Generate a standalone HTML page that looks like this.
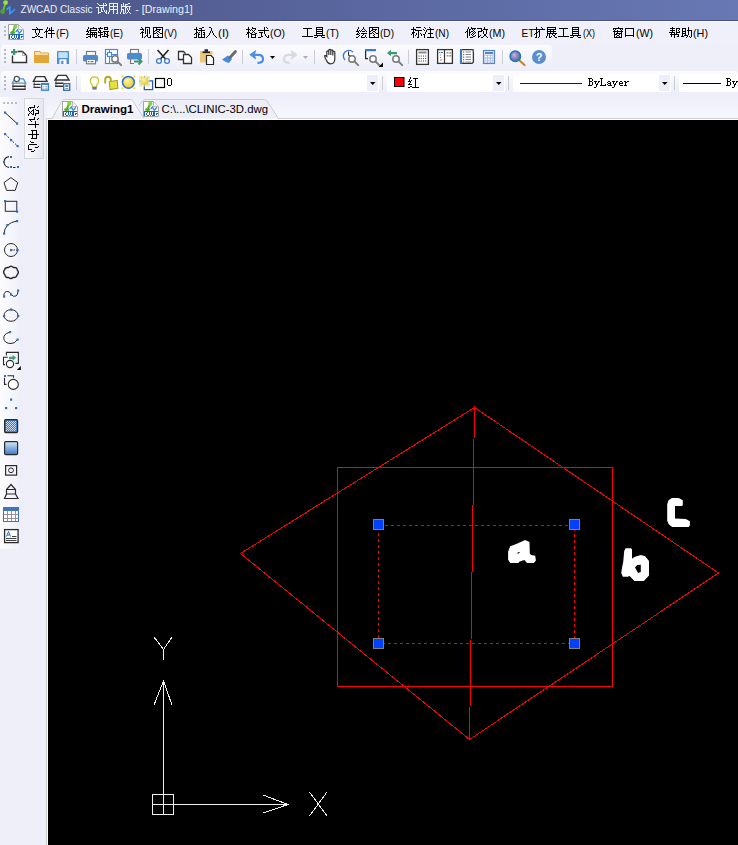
<!DOCTYPE html>
<html><head><meta charset="utf-8"><style>
html,body{margin:0;padding:0;width:738px;height:845px;overflow:hidden;background:#efeffa;}
svg{display:block;}
</style></head><body>
<svg width="738" height="845" viewBox="0 0 738 845">
<defs>
<linearGradient id="gTitle" x1="0" y1="0" x2="1" y2="0">
  <stop offset="0" stop-color="#4b5688"/>
  <stop offset="0.5" stop-color="#5a67a0"/>
  <stop offset="1" stop-color="#6878b4"/>
</linearGradient>
<linearGradient id="gTb" x1="0" y1="0" x2="0" y2="1">
  <stop offset="0" stop-color="#fcfcff"/>
  <stop offset="1" stop-color="#ededf9"/>
</linearGradient>
<linearGradient id="gLeft" x1="0" y1="0" x2="1" y2="0">
  <stop offset="0" stop-color="#fdfdff"/>
  <stop offset="1" stop-color="#ededf9"/>
</linearGradient>
<linearGradient id="gTab" x1="0" y1="0" x2="0" y2="1">
  <stop offset="0" stop-color="#fbfbff"/>
  <stop offset="1" stop-color="#eeeef8"/>
</linearGradient>
<linearGradient id="gDC" x1="0" y1="0" x2="1" y2="0">
  <stop offset="0" stop-color="#fbfbfd"/>
  <stop offset="1" stop-color="#e6e6f0"/>
</linearGradient>
</defs>
<rect x="0" y="0" width="738" height="845" fill="#efeffa"/>
<rect x="0" y="0" width="738" height="20" fill="url(#gTitle)"/>
<rect x="0" y="20" width="738" height="1" fill="#46518a"/>
<rect x="0" y="21" width="738" height="1" fill="#fbfbff"/>
<path d="M5.5,2.8 L3.2,10.5" stroke="#6cc828" stroke-width="1.8" stroke-linecap="round"/><circle cx="2.6" cy="11.6" r="2.3" fill="#4cab1a"/><circle cx="5.6" cy="2.6" r="2.4" fill="#9ce03a"/>
<path d="M6.4,9.6 L9.8,6.8 V13.8 L15,9.2" fill="none" stroke="#3a98f0" stroke-width="1.7" stroke-linejoin="round"/>
<text x="20.5" y="13" font-family="Liberation Sans" font-weight="normal" font-size="11.5" fill="#eceef6" textLength="72" lengthAdjust="spacingAndGlyphs" >ZWCAD Classic</text>
<path transform="translate(94,-1)" d="M3,4h1v1h-1zM9,4h1v1h-1zM11,4h1v1h-1zM15,4h9v1h-9zM29,4h1v1h-1zM34,4h2v1h-2zM4,5h1v1h-1zM9,5h1v1h-1zM12,5h1v1h-1zM15,5h1v1h-1zM19,5h1v1h-1zM23,5h1v1h-1zM27,5h1v1h-1zM29,5h1v1h-1zM31,5h3v1h-3zM5,6h8v1h-8zM15,6h1v1h-1zM19,6h1v1h-1zM23,6h1v1h-1zM27,6h1v1h-1zM29,6h1v1h-1zM31,6h1v1h-1zM9,7h1v1h-1zM15,7h9v1h-9zM27,7h10v1h-10zM2,8h3v1h-3zM6,8h4v1h-4zM15,8h1v1h-1zM19,8h1v1h-1zM23,8h1v1h-1zM27,8h1v1h-1zM31,8h2v1h-2zM35,8h1v1h-1zM4,9h1v1h-1zM7,9h1v1h-1zM9,9h1v1h-1zM15,9h1v1h-1zM19,9h1v1h-1zM23,9h1v1h-1zM27,9h1v1h-1zM31,9h1v1h-1zM33,9h1v1h-1zM35,9h1v1h-1zM4,10h1v1h-1zM7,10h1v1h-1zM9,10h1v1h-1zM15,10h9v1h-9zM27,10h3v1h-3zM31,10h1v1h-1zM33,10h1v1h-1zM35,10h1v1h-1zM4,11h1v1h-1zM7,11h1v1h-1zM10,11h1v1h-1zM12,11h1v1h-1zM15,11h1v1h-1zM19,11h1v1h-1zM23,11h1v1h-1zM27,11h1v1h-1zM29,11h1v1h-1zM31,11h1v1h-1zM34,11h1v1h-1zM4,12h1v1h-1zM7,12h2v1h-2zM10,12h1v1h-1zM12,12h1v1h-1zM15,12h1v1h-1zM19,12h1v1h-1zM23,12h1v1h-1zM27,12h1v1h-1zM29,12h1v1h-1zM31,12h1v1h-1zM34,12h1v1h-1zM4,13h3v1h-3zM11,13h2v1h-2zM14,13h1v1h-1zM19,13h1v1h-1zM23,13h1v1h-1zM26,13h1v1h-1zM29,13h1v1h-1zM31,13h1v1h-1zM33,13h1v1h-1zM35,13h1v1h-1zM4,14h1v1h-1zM12,14h1v1h-1zM14,14h1v1h-1zM19,14h1v1h-1zM22,14h2v1h-2zM26,14h1v1h-1zM29,14h2v1h-2zM32,14h1v1h-1zM36,14h1v1h-1z" fill="#eef0f8" shape-rendering="crispEdges"/>
<text x="135.3" y="13" font-family="Liberation Sans" font-weight="normal" font-size="11.5" fill="#eceef6" textLength="57.5" lengthAdjust="spacingAndGlyphs" >- [Drawing1]</text>
<rect x="0" y="22" width="738" height="23" fill="#f0f0fa"/>
<rect x="4" y="26" width="2" height="2" fill="#b8bcc0"/><rect x="4" y="30" width="2" height="2" fill="#b8bcc0"/><rect x="4" y="34" width="2" height="2" fill="#b8bcc0"/>
<g transform="translate(8,24)">
<path d="M0.5,0.5 H10.5 L15.5,5.5 V15.5 H0.5 Z" fill="#fff" stroke="#a3a3a3"/>
<path d="M10.5,0.5 V5.5 H15.5" fill="#f4f4f4" stroke="#b8b8b8"/>
<path d="M6.8,3.6 L5.2,7.2" stroke="#5cb028" stroke-width="2.2" stroke-linecap="round"/>
<circle cx="7.3" cy="2.7" r="2.1" fill="#86d43c"/>
<ellipse cx="4.6" cy="8.4" rx="2.6" ry="1.5" fill="#52ac22"/>
<path d="M7.7,8 L9.5,6 L11.2,9.3 L13.9,6.2" stroke="#3a8ae0" stroke-width="1.3" fill="none"/>
<rect x="1" y="10" width="14" height="5" fill="#1a66b8"/>
<g fill="#fff" shape-rendering="crispEdges"><rect x="2" y="11" width="1" height="4"/><rect x="3" y="11" width="1" height="1"/><rect x="4" y="12" width="1" height="2"/><rect x="3" y="14" width="1" height="1"/><rect x="5" y="11" width="1" height="3"/><rect x="7" y="11" width="1" height="3"/><rect x="9" y="11" width="1" height="3"/><rect x="6" y="14" width="1" height="1"/><rect x="8" y="14" width="1" height="1"/><rect x="5" y="14" width="1" height="0.01"/><rect x="12" y="11" width="3" height="1"/><rect x="12" y="12" width="1" height="2"/><rect x="12" y="14" width="3" height="1"/><rect x="14" y="13" width="1" height="1"/></g>
</g>
<path transform="translate(30,23)" d="M6,4h1v1h-1zM17,4h1v1h-1zM21,4h1v1h-1zM7,5h1v1h-1zM17,5h1v1h-1zM19,5h1v1h-1zM21,5h1v1h-1zM2,6h11v1h-11zM16,6h1v1h-1zM19,6h1v1h-1zM21,6h1v1h-1zM5,7h1v1h-1zM9,7h1v1h-1zM16,7h1v1h-1zM18,7h6v1h-6zM5,8h1v1h-1zM9,8h1v1h-1zM15,8h3v1h-3zM21,8h1v1h-1zM5,9h1v1h-1zM9,9h1v1h-1zM14,9h1v1h-1zM16,9h1v1h-1zM21,9h1v1h-1zM6,10h1v1h-1zM8,10h1v1h-1zM16,10h1v1h-1zM18,10h7v1h-7zM6,11h1v1h-1zM8,11h1v1h-1zM16,11h1v1h-1zM21,11h1v1h-1zM7,12h1v1h-1zM16,12h1v1h-1zM21,12h1v1h-1zM5,13h2v1h-2zM8,13h2v1h-2zM16,13h1v1h-1zM21,13h1v1h-1zM2,14h3v1h-3zM10,14h3v1h-3zM16,14h1v1h-1zM21,14h1v1h-1z" fill="#000" shape-rendering="crispEdges"/>
<text x="56" y="36.9" font-family="Liberation Sans" font-weight="normal" font-size="11.5" fill="#000" textLength="13" lengthAdjust="spacingAndGlyphs" >(F)</text>
<path transform="translate(84,23)" d="M4,4h1v1h-1zM9,4h1v1h-1zM16,4h1v1h-1zM20,4h4v1h-4zM4,5h1v1h-1zM6,5h7v1h-7zM14,5h5v1h-5zM20,5h1v1h-1zM23,5h1v1h-1zM3,6h1v1h-1zM6,6h1v1h-1zM12,6h1v1h-1zM15,6h1v1h-1zM20,6h4v1h-4zM3,7h1v1h-1zM5,7h8v1h-8zM15,7h2v1h-2zM2,8h3v1h-3zM6,8h1v1h-1zM14,8h1v1h-1zM16,8h1v1h-1zM19,8h6v1h-6zM4,9h1v1h-1zM6,9h7v1h-7zM14,9h5v1h-5zM20,9h1v1h-1zM23,9h1v1h-1zM3,10h1v1h-1zM6,10h1v1h-1zM8,10h1v1h-1zM10,10h1v1h-1zM12,10h1v1h-1zM16,10h1v1h-1zM20,10h2v1h-2zM23,10h1v1h-1zM2,11h11v1h-11zM16,11h3v1h-3zM20,11h1v1h-1zM22,11h2v1h-2zM6,12h1v1h-1zM8,12h1v1h-1zM10,12h1v1h-1zM12,12h1v1h-1zM14,12h3v1h-3zM20,12h1v1h-1zM23,12h2v1h-2zM4,13h3v1h-3zM8,13h1v1h-1zM10,13h1v1h-1zM12,13h1v1h-1zM16,13h1v1h-1zM18,13h6v1h-6zM2,14h2v1h-2zM6,14h1v1h-1zM11,14h2v1h-2zM16,14h1v1h-1zM23,14h1v1h-1z" fill="#000" shape-rendering="crispEdges"/>
<text x="110" y="36.9" font-family="Liberation Sans" font-weight="normal" font-size="11.5" fill="#000" textLength="13" lengthAdjust="spacingAndGlyphs" >(E)</text>
<path transform="translate(138,23)" d="M3,4h1v1h-1zM7,4h5v1h-5zM15,4h10v1h-10zM4,5h1v1h-1zM7,5h1v1h-1zM11,5h1v1h-1zM15,5h1v1h-1zM18,5h1v1h-1zM24,5h1v1h-1zM2,6h4v1h-4zM7,6h1v1h-1zM9,6h1v1h-1zM11,6h1v1h-1zM15,6h1v1h-1zM18,6h5v1h-5zM24,6h1v1h-1zM5,7h1v1h-1zM7,7h1v1h-1zM9,7h1v1h-1zM11,7h1v1h-1zM15,7h1v1h-1zM17,7h2v1h-2zM21,7h1v1h-1zM24,7h1v1h-1zM4,8h1v1h-1zM7,8h1v1h-1zM9,8h1v1h-1zM11,8h1v1h-1zM15,8h2v1h-2zM19,8h2v1h-2zM24,8h1v1h-1zM3,9h3v1h-3zM7,9h1v1h-1zM9,9h1v1h-1zM11,9h1v1h-1zM15,9h1v1h-1zM18,9h1v1h-1zM21,9h1v1h-1zM24,9h1v1h-1zM2,10h1v1h-1zM4,10h1v1h-1zM7,10h1v1h-1zM9,10h1v1h-1zM11,10h1v1h-1zM15,10h3v1h-3zM19,10h1v1h-1zM22,10h3v1h-3zM4,11h1v1h-1zM9,11h1v1h-1zM15,11h1v1h-1zM20,11h1v1h-1zM24,11h1v1h-1zM4,12h1v1h-1zM8,12h2v1h-2zM12,12h1v1h-1zM15,12h1v1h-1zM19,12h1v1h-1zM24,12h1v1h-1zM4,13h1v1h-1zM7,13h1v1h-1zM9,13h1v1h-1zM12,13h1v1h-1zM15,13h1v1h-1zM20,13h1v1h-1zM24,13h1v1h-1zM4,14h1v1h-1zM6,14h1v1h-1zM10,14h3v1h-3zM15,14h10v1h-10z" fill="#000" shape-rendering="crispEdges"/>
<text x="164" y="36.9" font-family="Liberation Sans" font-weight="normal" font-size="11.5" fill="#000" textLength="13" lengthAdjust="spacingAndGlyphs" >(V)</text>
<path transform="translate(192,23)" d="M4,4h1v1h-1zM10,4h2v1h-2zM17,4h2v1h-2zM4,5h1v1h-1zM7,5h3v1h-3zM19,5h1v1h-1zM2,6h4v1h-4zM9,6h1v1h-1zM19,6h1v1h-1zM4,7h1v1h-1zM6,7h7v1h-7zM19,7h1v1h-1zM4,8h1v1h-1zM9,8h1v1h-1zM18,8h1v1h-1zM20,8h1v1h-1zM4,9h2v1h-2zM7,9h1v1h-1zM9,9h1v1h-1zM11,9h2v1h-2zM18,9h1v1h-1zM20,9h1v1h-1zM3,10h2v1h-2zM6,10h1v1h-1zM9,10h1v1h-1zM12,10h1v1h-1zM17,10h1v1h-1zM21,10h1v1h-1zM2,11h1v1h-1zM4,11h1v1h-1zM6,11h2v1h-2zM9,11h1v1h-1zM11,11h2v1h-2zM17,11h1v1h-1zM21,11h1v1h-1zM4,12h1v1h-1zM6,12h1v1h-1zM9,12h1v1h-1zM12,12h1v1h-1zM16,12h1v1h-1zM22,12h1v1h-1zM4,13h1v1h-1zM6,13h1v1h-1zM9,13h1v1h-1zM12,13h1v1h-1zM15,13h1v1h-1zM23,13h1v1h-1zM2,14h3v1h-3zM6,14h7v1h-7zM14,14h1v1h-1zM24,14h1v1h-1z" fill="#000" shape-rendering="crispEdges"/>
<text x="218" y="36.9" font-family="Liberation Sans" font-weight="normal" font-size="11.5" fill="#000" textLength="11" lengthAdjust="spacingAndGlyphs" >(I)</text>
<path transform="translate(244,23)" d="M4,4h1v1h-1zM8,4h1v1h-1zM20,4h1v1h-1zM22,4h1v1h-1zM4,5h1v1h-1zM8,5h4v1h-4zM20,5h1v1h-1zM23,5h1v1h-1zM2,6h4v1h-4zM7,6h1v1h-1zM11,6h1v1h-1zM20,6h1v1h-1zM4,7h1v1h-1zM6,7h1v1h-1zM8,7h1v1h-1zM10,7h1v1h-1zM14,7h11v1h-11zM4,8h1v1h-1zM9,8h1v1h-1zM20,8h1v1h-1zM3,9h3v1h-3zM8,9h1v1h-1zM10,9h1v1h-1zM15,9h4v1h-4zM20,9h1v1h-1zM3,10h2v1h-2zM6,10h2v1h-2zM11,10h2v1h-2zM17,10h1v1h-1zM20,10h1v1h-1zM2,11h1v1h-1zM4,11h1v1h-1zM7,11h5v1h-5zM17,11h1v1h-1zM21,11h1v1h-1zM4,12h1v1h-1zM7,12h1v1h-1zM11,12h1v1h-1zM17,12h1v1h-1zM21,12h1v1h-1zM24,12h1v1h-1zM4,13h1v1h-1zM7,13h1v1h-1zM11,13h1v1h-1zM17,13h2v1h-2zM22,13h1v1h-1zM24,13h1v1h-1zM4,14h1v1h-1zM7,14h5v1h-5zM14,14h3v1h-3zM23,14h2v1h-2z" fill="#000" shape-rendering="crispEdges"/>
<text x="270" y="36.9" font-family="Liberation Sans" font-weight="normal" font-size="11.5" fill="#000" textLength="15" lengthAdjust="spacingAndGlyphs" >(O)</text>
<path transform="translate(300,23)" d="M16,4h7v1h-7zM3,5h9v1h-9zM16,5h1v1h-1zM22,5h1v1h-1zM7,6h1v1h-1zM16,6h7v1h-7zM7,7h1v1h-1zM16,7h1v1h-1zM22,7h1v1h-1zM7,8h1v1h-1zM16,8h7v1h-7zM7,9h1v1h-1zM16,9h1v1h-1zM22,9h1v1h-1zM7,10h1v1h-1zM16,10h7v1h-7zM7,11h1v1h-1zM16,11h1v1h-1zM22,11h1v1h-1zM7,12h1v1h-1zM14,12h11v1h-11zM2,13h11v1h-11zM17,13h1v1h-1zM21,13h1v1h-1zM14,14h3v1h-3zM22,14h3v1h-3z" fill="#000" shape-rendering="crispEdges"/>
<text x="326" y="36.9" font-family="Liberation Sans" font-weight="normal" font-size="11.5" fill="#000" textLength="13" lengthAdjust="spacingAndGlyphs" >(T)</text>
<path transform="translate(354,23)" d="M4,4h1v1h-1zM9,4h1v1h-1zM15,4h10v1h-10zM4,5h1v1h-1zM9,5h1v1h-1zM15,5h1v1h-1zM18,5h1v1h-1zM24,5h1v1h-1zM3,6h1v1h-1zM8,6h1v1h-1zM10,6h1v1h-1zM15,6h1v1h-1zM18,6h5v1h-5zM24,6h1v1h-1zM3,7h1v1h-1zM5,7h1v1h-1zM7,7h1v1h-1zM11,7h1v1h-1zM15,7h1v1h-1zM17,7h2v1h-2zM21,7h1v1h-1zM24,7h1v1h-1zM2,8h3v1h-3zM6,8h1v1h-1zM8,8h3v1h-3zM12,8h1v1h-1zM15,8h2v1h-2zM19,8h2v1h-2zM24,8h1v1h-1zM4,9h1v1h-1zM15,9h1v1h-1zM18,9h1v1h-1zM21,9h1v1h-1zM24,9h1v1h-1zM3,10h1v1h-1zM5,10h1v1h-1zM7,10h6v1h-6zM15,10h3v1h-3zM19,10h1v1h-1zM22,10h3v1h-3zM2,11h3v1h-3zM9,11h1v1h-1zM15,11h1v1h-1zM20,11h1v1h-1zM24,11h1v1h-1zM5,12h1v1h-1zM8,12h1v1h-1zM11,12h1v1h-1zM15,12h1v1h-1zM19,12h1v1h-1zM24,12h1v1h-1zM4,13h1v1h-1zM7,13h1v1h-1zM11,13h1v1h-1zM15,13h1v1h-1zM20,13h1v1h-1zM24,13h1v1h-1zM2,14h2v1h-2zM7,14h4v1h-4zM12,14h1v1h-1zM15,14h10v1h-10z" fill="#000" shape-rendering="crispEdges"/>
<text x="380" y="36.9" font-family="Liberation Sans" font-weight="normal" font-size="11.5" fill="#000" textLength="14" lengthAdjust="spacingAndGlyphs" >(D)</text>
<path transform="translate(409,23)" d="M4,4h1v1h-1zM7,4h5v1h-5zM15,4h1v1h-1zM20,4h1v1h-1zM4,5h1v1h-1zM16,5h1v1h-1zM21,5h1v1h-1zM2,6h5v1h-5zM14,6h1v1h-1zM18,6h7v1h-7zM4,7h1v1h-1zM6,7h7v1h-7zM15,7h1v1h-1zM17,7h1v1h-1zM21,7h1v1h-1zM4,8h1v1h-1zM9,8h1v1h-1zM17,8h1v1h-1zM21,8h1v1h-1zM3,9h3v1h-3zM9,9h1v1h-1zM16,9h1v1h-1zM21,9h1v1h-1zM3,10h2v1h-2zM7,10h1v1h-1zM9,10h1v1h-1zM11,10h1v1h-1zM16,10h1v1h-1zM19,10h5v1h-5zM2,11h1v1h-1zM4,11h1v1h-1zM7,11h1v1h-1zM9,11h1v1h-1zM12,11h1v1h-1zM14,11h2v1h-2zM21,11h1v1h-1zM4,12h1v1h-1zM6,12h1v1h-1zM9,12h1v1h-1zM12,12h1v1h-1zM15,12h1v1h-1zM21,12h1v1h-1zM4,13h1v1h-1zM9,13h1v1h-1zM15,13h1v1h-1zM21,13h1v1h-1zM4,14h1v1h-1zM8,14h2v1h-2zM15,14h1v1h-1zM18,14h7v1h-7z" fill="#000" shape-rendering="crispEdges"/>
<text x="435" y="36.9" font-family="Liberation Sans" font-weight="normal" font-size="11.5" fill="#000" textLength="14" lengthAdjust="spacingAndGlyphs" >(N)</text>
<path transform="translate(463,23)" d="M5,4h1v1h-1zM8,4h1v1h-1zM21,4h1v1h-1zM5,5h1v1h-1zM8,5h5v1h-5zM14,5h5v1h-5zM21,5h1v1h-1zM4,6h1v1h-1zM6,6h2v1h-2zM9,6h1v1h-1zM11,6h1v1h-1zM18,6h1v1h-1zM20,6h5v1h-5zM4,7h1v1h-1zM6,7h1v1h-1zM10,7h1v1h-1zM18,7h2v1h-2zM23,7h1v1h-1zM3,8h2v1h-2zM6,8h1v1h-1zM8,8h2v1h-2zM11,8h1v1h-1zM15,8h4v1h-4zM20,8h1v1h-1zM23,8h1v1h-1zM2,9h1v1h-1zM4,9h1v1h-1zM6,9h2v1h-2zM10,9h1v1h-1zM12,9h1v1h-1zM15,9h1v1h-1zM20,9h1v1h-1zM23,9h1v1h-1zM4,10h1v1h-1zM6,10h1v1h-1zM9,10h1v1h-1zM11,10h1v1h-1zM15,10h1v1h-1zM20,10h1v1h-1zM23,10h1v1h-1zM4,11h1v1h-1zM6,11h1v1h-1zM8,11h1v1h-1zM10,11h1v1h-1zM15,11h1v1h-1zM21,11h2v1h-2zM4,12h1v1h-1zM6,12h1v1h-1zM9,12h1v1h-1zM12,12h1v1h-1zM15,12h1v1h-1zM17,12h1v1h-1zM21,12h2v1h-2zM4,13h1v1h-1zM10,13h2v1h-2zM15,13h2v1h-2zM20,13h1v1h-1zM23,13h1v1h-1zM4,14h1v1h-1zM7,14h3v1h-3zM15,14h1v1h-1zM18,14h2v1h-2zM24,14h1v1h-1z" fill="#000" shape-rendering="crispEdges"/>
<text x="489" y="36.9" font-family="Liberation Sans" font-weight="normal" font-size="11.5" fill="#000" textLength="16" lengthAdjust="spacingAndGlyphs" >(M)</text>
<path transform="translate(610,23)" d="M8,4h1v1h-1zM3,5h10v1h-10zM15,5h9v1h-9zM3,6h1v1h-1zM5,6h1v1h-1zM10,6h1v1h-1zM12,6h1v1h-1zM15,6h1v1h-1zM23,6h1v1h-1zM4,7h1v1h-1zM7,7h1v1h-1zM11,7h1v1h-1zM15,7h1v1h-1zM23,7h1v1h-1zM3,8h10v1h-10zM15,8h1v1h-1zM23,8h1v1h-1zM4,9h1v1h-1zM7,9h1v1h-1zM11,9h1v1h-1zM15,9h1v1h-1zM23,9h1v1h-1zM4,10h1v1h-1zM6,10h6v1h-6zM15,10h1v1h-1zM23,10h1v1h-1zM4,11h3v1h-3zM9,11h1v1h-1zM11,11h1v1h-1zM15,11h1v1h-1zM23,11h1v1h-1zM4,12h1v1h-1zM7,12h2v1h-2zM11,12h1v1h-1zM15,12h9v1h-9zM4,13h1v1h-1zM6,13h1v1h-1zM9,13h1v1h-1zM11,13h1v1h-1zM15,13h1v1h-1zM23,13h1v1h-1zM4,14h8v1h-8z" fill="#000" shape-rendering="crispEdges"/>
<text x="636" y="36.9" font-family="Liberation Sans" font-weight="normal" font-size="11.5" fill="#000" textLength="17" lengthAdjust="spacingAndGlyphs" >(W)</text>
<path transform="translate(667,23)" d="M5,4h1v1h-1zM21,4h1v1h-1zM3,5h5v1h-5zM9,5h4v1h-4zM15,5h4v1h-4zM21,5h1v1h-1zM5,6h1v1h-1zM9,6h1v1h-1zM12,6h1v1h-1zM15,6h1v1h-1zM18,6h1v1h-1zM21,6h1v1h-1zM3,7h5v1h-5zM9,7h1v1h-1zM11,7h1v1h-1zM15,7h1v1h-1zM18,7h1v1h-1zM20,7h5v1h-5zM5,8h1v1h-1zM9,8h1v1h-1zM12,8h1v1h-1zM15,8h4v1h-4zM21,8h1v1h-1zM24,8h1v1h-1zM2,9h6v1h-6zM9,9h4v1h-4zM15,9h1v1h-1zM18,9h1v1h-1zM21,9h1v1h-1zM24,9h1v1h-1zM4,10h1v1h-1zM7,10h1v1h-1zM9,10h1v1h-1zM15,10h4v1h-4zM21,10h1v1h-1zM24,10h1v1h-1zM3,11h9v1h-9zM15,11h1v1h-1zM18,11h1v1h-1zM21,11h1v1h-1zM24,11h1v1h-1zM4,12h1v1h-1zM7,12h1v1h-1zM11,12h1v1h-1zM15,12h1v1h-1zM17,12h4v1h-4zM24,12h1v1h-1zM4,13h1v1h-1zM7,13h1v1h-1zM10,13h2v1h-2zM14,13h3v1h-3zM20,13h1v1h-1zM22,13h1v1h-1zM24,13h1v1h-1zM7,14h1v1h-1zM19,14h1v1h-1zM23,14h1v1h-1z" fill="#000" shape-rendering="crispEdges"/>
<text x="693" y="36.9" font-family="Liberation Sans" font-weight="normal" font-size="11.5" fill="#000" textLength="15" lengthAdjust="spacingAndGlyphs" >(H)</text>
<text x="521.5" y="36.9" font-family="Liberation Sans" font-weight="normal" font-size="11.5" fill="#000" textLength="13" lengthAdjust="spacingAndGlyphs" >ET</text>
<path transform="translate(532,23)" d="M4,4h1v1h-1zM9,4h1v1h-1zM15,4h9v1h-9zM40,4h7v1h-7zM4,5h1v1h-1zM10,5h1v1h-1zM15,5h1v1h-1zM23,5h1v1h-1zM27,5h9v1h-9zM40,5h1v1h-1zM46,5h1v1h-1zM2,6h11v1h-11zM15,6h9v1h-9zM31,6h1v1h-1zM40,6h7v1h-7zM4,7h1v1h-1zM7,7h1v1h-1zM15,7h1v1h-1zM18,7h1v1h-1zM21,7h1v1h-1zM31,7h1v1h-1zM40,7h1v1h-1zM46,7h1v1h-1zM4,8h1v1h-1zM6,8h2v1h-2zM15,8h9v1h-9zM31,8h1v1h-1zM40,8h7v1h-7zM4,9h2v1h-2zM7,9h1v1h-1zM15,9h1v1h-1zM18,9h1v1h-1zM21,9h1v1h-1zM31,9h1v1h-1zM40,9h1v1h-1zM46,9h1v1h-1zM3,10h2v1h-2zM7,10h1v1h-1zM15,10h10v1h-10zM31,10h1v1h-1zM40,10h7v1h-7zM2,11h1v1h-1zM4,11h1v1h-1zM7,11h1v1h-1zM15,11h1v1h-1zM17,11h1v1h-1zM20,11h1v1h-1zM23,11h1v1h-1zM31,11h1v1h-1zM40,11h1v1h-1zM46,11h1v1h-1zM4,12h1v1h-1zM7,12h1v1h-1zM15,12h1v1h-1zM17,12h1v1h-1zM21,12h2v1h-2zM31,12h1v1h-1zM38,12h11v1h-11zM4,13h1v1h-1zM7,13h1v1h-1zM14,13h1v1h-1zM17,13h1v1h-1zM19,13h1v1h-1zM22,13h1v1h-1zM26,13h11v1h-11zM41,13h1v1h-1zM45,13h1v1h-1zM3,14h2v1h-2zM6,14h1v1h-1zM14,14h1v1h-1zM17,14h2v1h-2zM23,14h2v1h-2zM38,14h3v1h-3zM46,14h3v1h-3z" fill="#000" shape-rendering="crispEdges"/>
<text x="583" y="36.9" font-family="Liberation Sans" font-weight="normal" font-size="11.5" fill="#000" textLength="12" lengthAdjust="spacingAndGlyphs" >(X)</text>
<rect x="1" y="45" width="551" height="25" rx="3" fill="url(#gTb)"/>
<rect x="4" y="49" width="2" height="2" fill="#b3b8bc"/><rect x="4" y="53" width="2" height="2" fill="#b3b8bc"/><rect x="4" y="57" width="2" height="2" fill="#b3b8bc"/><rect x="4" y="61" width="2" height="2" fill="#b3b8bc"/>
<path d="M17.5,51.5 H22.5 L26.5,55.5 V62.5 H12.5 V55.5" fill="#fff" stroke="#333" stroke-width="1.4"/>
<path d="M22.5,51.5 V55.5 H26.5" fill="none" stroke="#999" stroke-width="0.8"/>
<rect x="13" y="49" width="2.2" height="6" fill="#3d9470"/><rect x="11" y="51" width="6.2" height="2.2" fill="#3d9470"/>
<path d="M34,51 H40 L41.5,52.5 H48 Q49,52.5 49,53.5 V62.5 Q49,63 48.5,63 H34.5 Q34,63 34,62.5 Z" fill="#e2a736"/>
<path d="M35,52 H39.5 L41,53.5 H48 V55 H35 Z" fill="#fbe1a6"/>
<rect x="57" y="51" width="12" height="13" rx="0.5" fill="#4d8ed6"/>
<rect x="58.3" y="52.2" width="9.4" height="5.8" fill="#c3e2fb"/>
<rect x="59.5" y="59.3" width="7" height="4.7" fill="#fff"/><rect x="61.2" y="60.8" width="2.2" height="3.2" fill="#4d8ed6"/>
<rect x="76" y="49" width="1" height="15" fill="#c9cfd0"/>
<rect x="86.5" y="51.5" width="9" height="4" fill="#fff" stroke="#7a7a7a" stroke-width="1.2"/>
<rect x="83" y="55" width="15" height="6.5" rx="1.5" fill="#4a8bd6"/>
<rect x="86.5" y="59.3" width="9" height="4.5" fill="#fff" stroke="#7a7a7a" stroke-width="1.2"/>
<rect x="88" y="61" width="1.5" height="1.2" fill="#3a7ac8"/><rect x="90.5" y="61" width="3" height="1.2" fill="#3a7ac8"/>
<rect x="105.5" y="49.5" width="12" height="14" fill="#fff" stroke="#4a8ad4" stroke-width="1.2"/>
<path d="M105.5,54.5 H117.5 M109.5,49.5 V63.5" stroke="#4a8ad4" stroke-width="1.1"/>
<rect x="107.5" y="52.5" width="4" height="4" fill="#fff" stroke="#4a8ad4" stroke-width="1.1"/>
<circle cx="115" cy="59" r="3.2" fill="#fff" stroke="#7a7a7a" stroke-width="1.5"/><line x1="117.4" y1="61.4" x2="121.2" y2="65.2" stroke="#7a7a7a" stroke-width="1.9" stroke-linecap="round"/>
<rect x="130.5" y="49.5" width="8" height="4" fill="#fff" stroke="#7a7a7a" stroke-width="1.2"/>
<rect x="127" y="53" width="15" height="6.5" rx="1.5" fill="#4a8bd6"/>
<path d="M130.5,57.5 V63.5 H134" fill="none" stroke="#7a7a7a" stroke-width="1.2"/>
<path d="M134,61.5 H141 M138.5,58.5 L141.5,61.5 L138.5,64.5" fill="none" stroke="#3b9a70" stroke-width="2"/>
<rect x="148" y="49" width="1" height="15" fill="#c9cfd0"/>
<path d="M157.5,50 L166,59.5 M168.5,50 L160,59.5" stroke="#222" stroke-width="1.6"/>
<circle cx="159" cy="61" r="2.4" fill="#fff" stroke="#3a7ac8" stroke-width="1.3"/><circle cx="167" cy="61" r="2.4" fill="#fff" stroke="#3a7ac8" stroke-width="1.3"/>
<path d="M183,59.5 H178.5 V51.5 H183.5 L185.5,53.5" fill="#fff" stroke="#333" stroke-width="1.3"/>
<path d="M183.5,54.5 H188.5 L191.5,57.5 V63.5 H183.5 Z" fill="#fff" stroke="#333" stroke-width="1.3"/>
<rect x="200" y="51" width="12.5" height="11.5" fill="#eec57c"/>
<rect x="204.5" y="49.3" width="3.5" height="2.5" fill="#222"/><rect x="202.5" y="51.5" width="7.5" height="1.6" fill="#222"/>
<path d="M206.5,55.5 H211 L213.5,58 V64.5 H206.5 Z" fill="#fff" stroke="#222" stroke-width="1.2"/>
<path d="M222,59.5 L228,55.5 L232,59 L229,63 Q225,62 222,59.5 Z" fill="#4a8ad4"/>
<path d="M230,57.5 L235.5,51.5" stroke="#6a6a6a" stroke-width="2.8" stroke-linecap="round"/>
<rect x="242" y="50" width="1" height="14" fill="#c9cfd0"/>
<path d="M253,54.8 H258 Q263,54.8 263,59 Q263,62.8 258.5,62.8 H257.5" fill="none" stroke="#4a90e0" stroke-width="2.2"/>
<path d="M249.8,54.8 L255.8,50.6 L254.3,54.8 L255.8,59 Z" fill="#4a90e0" stroke="#4a90e0" stroke-width="0.8" stroke-linejoin="round"/>
<path d="M270,56 H275 L272.5,59 Z" fill="#000"/>
<path d="M294,54.8 H289 Q284,54.8 284,59 Q284,62.8 288.5,62.8 H289.5" fill="none" stroke="#d6dadd" stroke-width="2.2"/>
<path d="M297.2,54.8 L291.2,50.6 L292.7,54.8 L291.2,59 Z" fill="#d6dadd" stroke="#d6dadd" stroke-width="0.8" stroke-linejoin="round"/>
<path d="M303,56 H308 L305.5,59 Z" fill="#a9adb0"/>
<rect x="314" y="50" width="1" height="14" fill="#c9cfd0"/>
<path d="M326.5,60.5 Q325,58 324.6,55.8 Q325.5,55 326.8,56.5 V51.5 Q327.8,50.3 328.8,51.5 V55 V50 Q329.8,48.8 330.8,50 V55 V50.5 Q331.8,49.3 332.8,50.5 V55.5 V52 Q333.8,50.8 334.8,52 V59 Q334.8,63.8 330.5,63.8 Q327.8,63.8 326.5,60.5 Z" fill="#fff" stroke="#333" stroke-width="1.2"/>
<path d="M345,60 A5,5 0 1 1 353,52" fill="none" stroke="#3a7ac8" stroke-width="1.4"/>
<path d="M348.5,51.5 V55.5 H350.5" fill="none" stroke="#333" stroke-width="1"/>
<circle cx="352" cy="59" r="3.2" fill="#fff" stroke="#7a7a7a" stroke-width="1.5"/><line x1="354.4" y1="61.4" x2="358.2" y2="65.2" stroke="#7a7a7a" stroke-width="1.9" stroke-linecap="round"/>
<rect x="365" y="49" width="11" height="2.2" fill="#3a7ac8"/>
<path d="M365.6,51 V58.6 H368" fill="none" stroke="#222" stroke-width="1.2"/>
<circle cx="373" cy="59" r="3.2" fill="#fff" stroke="#7a7a7a" stroke-width="1.5"/><line x1="375.4" y1="61.4" x2="379.2" y2="65.2" stroke="#7a7a7a" stroke-width="1.9" stroke-linecap="round"/>
<path d="M383,62.5 V67 H378.5 Z" fill="#000"/>
<path d="M387,53 L391,49.8 V52 H397 V54.2 H391 V56.3 Z" fill="#3b9a70"/>
<circle cx="396" cy="59" r="3.2" fill="#fff" stroke="#7a7a7a" stroke-width="1.5"/><line x1="398.4" y1="61.4" x2="402.2" y2="65.2" stroke="#7a7a7a" stroke-width="1.9" stroke-linecap="round"/>
<rect x="408" y="50" width="1" height="14" fill="#c9cfd0"/>
<rect x="416.6" y="49.6" width="11.8" height="14.8" fill="#fff" stroke="#333" stroke-width="1.3"/>
<rect x="418.5" y="51.5" width="8" height="2" fill="#8a8a8a"/>
<rect x="418.5" y="55.5" width="1.1" height="1.1" fill="#555"/>
<rect x="420.7" y="55.5" width="1.1" height="1.1" fill="#555"/>
<rect x="422.9" y="55.5" width="1.1" height="1.1" fill="#555"/>
<rect x="425.1" y="55.5" width="1.1" height="1.1" fill="#555"/>
<rect x="418.5" y="58" width="1.1" height="1.1" fill="#555"/>
<rect x="420.7" y="58" width="1.1" height="1.1" fill="#555"/>
<rect x="422.9" y="58" width="1.1" height="1.1" fill="#555"/>
<rect x="425.1" y="58" width="1.1" height="1.1" fill="#555"/>
<rect x="418.5" y="60.5" width="1.1" height="1.1" fill="#555"/>
<rect x="420.7" y="60.5" width="1.1" height="1.1" fill="#555"/>
<rect x="422.9" y="60.5" width="1.1" height="1.1" fill="#555"/>
<rect x="425.1" y="60.5" width="1.1" height="1.1" fill="#555"/>
<rect x="437.6" y="49.6" width="14.8" height="13.8" fill="#fff" stroke="#333" stroke-width="1.3"/>
<line x1="444.5" y1="49.6" x2="444.5" y2="63.4" stroke="#333" stroke-width="1.2"/>
<rect x="439" y="52" width="1.5" height="1" fill="#3a7ac8"/><rect x="441" y="52" width="2" height="1" fill="#3a7ac8"/>
<rect x="440" y="54.5" width="1" height="1" fill="#888"/><rect x="440" y="57" width="1" height="1" fill="#888"/><rect x="440" y="59.5" width="2" height="1" fill="#888"/>
<rect x="446.5" y="52" width="2" height="1.6" fill="#999"/><rect x="449.3" y="52" width="2" height="1.6" fill="#999"/><rect x="446.5" y="55" width="2" height="1.6" fill="#999"/><rect x="449.3" y="55" width="2" height="1.6" fill="#999"/>
<path d="M460.6,49.6 H473.4 V62 L472,63.4 H460.6 Z" fill="#fff" stroke="#333" stroke-width="1.3"/>
<rect x="460" y="49" width="2" height="15" fill="#3a7ac8"/><rect x="472.5" y="49" width="1.5" height="3" fill="#3a7ac8"/>
<rect x="463" y="51.5" width="1.2" height="1.2" fill="#3a7ac8"/><rect x="465.5" y="51.5" width="5.5" height="1" fill="#888"/>
<rect x="463" y="54.0" width="1.2" height="1.2" fill="#3a7ac8"/><rect x="465.5" y="54.0" width="5.5" height="1" fill="#888"/>
<rect x="463" y="56.5" width="1.2" height="1.2" fill="#3a7ac8"/><rect x="465.5" y="56.5" width="5.5" height="1" fill="#888"/>
<rect x="463" y="59.0" width="1.2" height="1.2" fill="#3a7ac8"/><rect x="465.5" y="59.0" width="5.5" height="1" fill="#888"/>
<rect x="463" y="61.5" width="1.2" height="1.2" fill="#3a7ac8"/><rect x="465.5" y="61.5" width="5.5" height="1" fill="#888"/>
<rect x="483.5" y="50.5" width="11" height="13" fill="#dde6f5" stroke="#5a85c5" stroke-width="1.2"/>
<rect x="485" y="52" width="8" height="2" fill="#5a85c5"/>
<rect x="485" y="55.5" width="2.2" height="1.8" fill="#fff" stroke="#8ea8d8" stroke-width="0.4"/>
<rect x="487.8" y="55.5" width="2.2" height="1.8" fill="#fff" stroke="#8ea8d8" stroke-width="0.4"/>
<rect x="490.6" y="55.5" width="2.2" height="1.8" fill="#fff" stroke="#8ea8d8" stroke-width="0.4"/>
<rect x="485" y="58.3" width="2.2" height="1.8" fill="#fff" stroke="#8ea8d8" stroke-width="0.4"/>
<rect x="487.8" y="58.3" width="2.2" height="1.8" fill="#fff" stroke="#8ea8d8" stroke-width="0.4"/>
<rect x="490.6" y="58.3" width="2.2" height="1.8" fill="#fff" stroke="#8ea8d8" stroke-width="0.4"/>
<rect x="485" y="61" width="2.2" height="1.8" fill="#fff" stroke="#8ea8d8" stroke-width="0.4"/>
<rect x="487.8" y="61" width="2.2" height="1.8" fill="#fff" stroke="#8ea8d8" stroke-width="0.4"/>
<rect x="490.6" y="61" width="2.2" height="1.8" fill="#fff" stroke="#8ea8d8" stroke-width="0.4"/>
<rect x="502" y="50" width="1" height="14" fill="#c9cfd0"/>
<defs><radialGradient id="gWeb" cx="0.4" cy="0.4" r="0.6"><stop offset="0" stop-color="#c8b8e0"/><stop offset="0.6" stop-color="#8a78c0"/><stop offset="1" stop-color="#3a9a7a"/></radialGradient></defs>
<line x1="519" y1="60" x2="524.5" y2="65" stroke="#c98438" stroke-width="2.2" stroke-linecap="round"/>
<circle cx="515.3" cy="56.2" r="5.2" fill="url(#gWeb)" stroke="#1f74b8" stroke-width="1.5"/>
<circle cx="539" cy="57" r="7" fill="#5b8fcc"/>
<text x="539" y="61.3" text-anchor="middle" font-family="Liberation Sans" font-weight="bold" font-size="11" fill="#fff">?</text>
<rect x="1" y="71" width="737" height="22" rx="3" fill="url(#gTb)"/>
<rect x="4" y="76" width="2" height="2" fill="#b3b8bc"/><rect x="4" y="80" width="2" height="2" fill="#b3b8bc"/><rect x="4" y="84" width="2" height="2" fill="#b3b8bc"/><rect x="4" y="88" width="2" height="2" fill="#b3b8bc"/>
<rect x="12.8" y="83" width="12.4" height="6.3" fill="#fff"/>
<path d="M13,83.2 V89.3 M25,83.2 V89.3" stroke="#555" stroke-width="0.9"/>
<path d="M12.3,86.3 H25.7 M12.3,89.3 H25.7" stroke="#333" stroke-width="1.4"/>
<path d="M12.3,83.2 L14.6,78.8 H23.4 L25.7,83.2 Z" fill="#fff" stroke="#4a90d8" stroke-width="1.3"/>
<circle cx="16.8" cy="79" r="2.6" fill="#fff" stroke="#555" stroke-width="1.2"/>
<rect x="34" y="81.4" width="6.5" height="6" fill="#fff"/>
<path d="M34.2,81.4 V87.4" stroke="#555" stroke-width="0.9"/>
<path d="M33.5,84.4 H40.5 M33.5,87.4 H40.5" stroke="#333" stroke-width="1.4"/>
<path d="M33.4,81.4 L36,76.6 H44.7 L47,81.4 Z" fill="#fff" stroke="#333" stroke-width="1.4"/>
<rect x="41.6" y="83.6" width="6.8" height="6.6" fill="#fff" stroke="#3a86d0" stroke-width="1.4"/>
<rect x="41" y="83" width="8" height="2" fill="#3a86d0"/>
<rect x="43.3" y="86.3" width="1" height="1" fill="#8a8a8a"/><rect x="45.3" y="86.3" width="1.8" height="1" fill="#8a8a8a"/><rect x="43.3" y="88.3" width="1" height="1" fill="#8a8a8a"/><rect x="45.3" y="88.3" width="1.8" height="1" fill="#8a8a8a"/>
<rect x="55.8" y="80" width="7.5" height="6.3" fill="#fff"/>
<path d="M56,80 V86.3" stroke="#555" stroke-width="0.9"/>
<path d="M55.1,83.3 H63.5 M55.1,86.3 H63.5" stroke="#333" stroke-width="1.4"/>
<path d="M55.1,80 L58.1,75.4 H66.3 L69,80 Z" fill="#fff" stroke="#333" stroke-width="1.4"/>
<rect x="63.7" y="83.7" width="6" height="6.6" fill="#fff" stroke="#3a72b8" stroke-width="1.4"/>
<rect x="65.3" y="85.2" width="3" height="1.8" fill="#3a72b8"/><rect x="65.3" y="88" width="3" height="0.9" fill="#8a8a8a"/>
<rect x="76" y="76" width="1" height="14" fill="#c9cfd0"/>
<rect x="81" y="74" width="298" height="18" fill="#fff"/><rect x="367" y="75" width="11" height="16" fill="#eeeefa"/><path d="M370,82 H375.5 L372.75,85 Z" fill="#000"/>
<rect x="382" y="76" width="1" height="14" fill="#c9cfd0"/>
<rect x="387" y="74" width="118" height="18" fill="#fff"/><rect x="493" y="75" width="11" height="16" fill="#eeeefa"/><path d="M496,82 H501.5 L498.75,85 Z" fill="#000"/>
<rect x="508" y="76" width="1" height="14" fill="#c9cfd0"/>
<rect x="513" y="74" width="158" height="18" fill="#fff"/><rect x="659" y="75" width="11" height="16" fill="#eeeefa"/><path d="M662,82 H667.5 L664.75,85 Z" fill="#000"/>
<rect x="674" y="76" width="1" height="14" fill="#c9cfd0"/>
<rect x="679" y="74" width="59" height="18" fill="#fff"/>
<path d="M94.5,76.8 Q90.3,76.8 90.3,81 Q90.3,83.2 92.3,85 V87 H96.7 V85 Q98.7,83.2 98.7,81 Q98.7,76.8 94.5,76.8 Z" fill="#fffff0" stroke="#c8c23a" stroke-width="1.2"/>
<rect x="92.3" y="86.8" width="4.4" height="2.8" fill="#6a7aa8"/>
<path d="M105.2,83.5 V79.8 Q105.2,76.8 108,76.8 Q110.8,76.8 110.8,79.8 V81" fill="none" stroke="#b0a820" stroke-width="1.9"/>
<path d="M109.3,81.8 L117.3,80.3 L117.8,88.3 L110,89.5 Z" fill="#e6e040" stroke="#a8a020" stroke-width="1.1"/>
<defs><radialGradient id="gSun" cx="0.4" cy="0.35" r="0.7"><stop offset="0" stop-color="#fff6a0"/><stop offset="1" stop-color="#e6c42c"/></radialGradient></defs>
<rect x="121.6" y="75.6" width="1.8" height="1.8" fill="#e8d040"/>
<rect x="133.4" y="75.6" width="1.8" height="1.8" fill="#e8d040"/>
<rect x="121.6" y="87.4" width="1.8" height="1.8" fill="#e8d040"/>
<rect x="133.4" y="87.4" width="1.8" height="1.8" fill="#e8d040"/>
<circle cx="128.4" cy="82.3" r="5.9" fill="url(#gSun)" stroke="#2a74d0" stroke-width="1.5"/>
<rect x="139" y="75.8" width="11" height="11" fill="#e8e070" opacity="0.55"/>
<path d="M144.5,75.8 V86.2 M139.3,81 H149.7 M140.8,77.3 L148.2,84.7 M148.2,77.3 L140.8,84.7" stroke="#8ab0e0" stroke-width="1"/>
<circle cx="144.5" cy="81" r="3.8" fill="url(#gSun)"/>
<path d="M149.5,80.8 H152.6 V89.6 H144.3 V86.5" fill="none" stroke="#2a5aa8" stroke-width="1.3"/>
<rect x="155.5" y="78.5" width="9" height="9" fill="#fff" stroke="#000" stroke-width="1.2"/>
<path d="M168,78h3v1h-3z M167,79h1v6h-1z M171,79h1v6h-1z M168,85h3v1h-3z" fill="#000" shape-rendering="crispEdges"/>
<rect x="394.5" y="77.5" width="9.5" height="9" fill="#ff0000" stroke="#000" stroke-width="1"/>
<path transform="translate(406,73)" d="M4,4h1v1h-1zM4,5h1v1h-1zM7,5h5v1h-5zM3,6h1v1h-1zM9,6h1v1h-1zM3,7h1v1h-1zM5,7h1v1h-1zM9,7h1v1h-1zM2,8h3v1h-3zM9,8h1v1h-1zM4,9h1v1h-1zM9,9h1v1h-1zM3,10h1v1h-1zM9,10h1v1h-1zM2,11h4v1h-4zM9,11h1v1h-1zM9,12h1v1h-1zM4,13h2v1h-2zM9,13h1v1h-1zM2,14h2v1h-2zM6,14h7v1h-7z" fill="#000" shape-rendering="crispEdges"/>
<rect x="520" y="83" width="62" height="1" fill="#4e0414" shape-rendering="crispEdges"/>
<path d="M588,78h4v1h-4zM589,79h1v1h-1zM589,80h1v1h-1zM589,81h3v1h-3zM589,82h1v1h-1zM589,83h1v1h-1zM589,84h1v1h-1zM592,79h1v1h-1zM592,80h1v1h-1zM592,82h1v1h-1zM592,83h1v1h-1zM592,84h1v1h-1zM588,85h4v1h-4zM594,81h3v1h-3zM598,81h2v1h-2zM595,82h1v1h-1zM598,82h1v1h-1zM595,83h1v1h-1zM597,83h1v1h-1zM596,84h2v1h-2zM596,85h1v1h-1zM596,86h1v1h-1zM594,87h2v1h-2zM600,78h3v1h-3zM601,79h1v1h-1zM601,80h1v1h-1zM601,81h1v1h-1zM601,82h1v1h-1zM601,83h1v1h-1zM601,84h1v1h-1zM605,84h1v1h-1zM600,85h6v1h-6zM608,81h2v1h-2zM607,82h1v1h-1zM610,82h1v1h-1zM608,83h3v1h-3zM607,84h1v1h-1zM610,84h1v1h-1zM608,85h4v1h-4zM612,81h3v1h-3zM616,81h2v1h-2zM613,82h1v1h-1zM616,82h1v1h-1zM613,83h1v1h-1zM615,83h1v1h-1zM614,84h2v1h-2zM614,85h1v1h-1zM614,86h1v1h-1zM612,87h2v1h-2zM620,81h2v1h-2zM619,82h1v1h-1zM622,82h1v1h-1zM619,83h4v1h-4zM619,84h1v1h-1zM620,85h3v1h-3zM624,81h2v1h-2zM627,81h2v1h-2zM625,82h1v1h-1zM626,82h1v1h-1zM625,83h1v1h-1zM625,84h1v1h-1zM624,85h3v1h-3z" fill="#000" shape-rendering="crispEdges"/>
<rect x="683" y="83" width="38" height="1" fill="#000" shape-rendering="crispEdges"/>
<path d="M726,78h4v1h-4zM727,79h1v1h-1zM727,80h1v1h-1zM727,81h3v1h-3zM727,82h1v1h-1zM727,83h1v1h-1zM727,84h1v1h-1zM730,79h1v1h-1zM730,80h1v1h-1zM730,82h1v1h-1zM730,83h1v1h-1zM730,84h1v1h-1zM726,85h4v1h-4zM732,81h3v1h-3zM736,81h2v1h-2zM733,82h1v1h-1zM736,82h1v1h-1zM733,83h1v1h-1zM735,83h1v1h-1zM734,84h2v1h-2zM734,85h1v1h-1zM734,86h1v1h-1zM732,87h2v1h-2z" fill="#000" shape-rendering="crispEdges"/>
<defs><linearGradient id="gTabRow" x1="0" y1="0" x2="0" y2="1"><stop offset="0" stop-color="#ededf9"/><stop offset="1" stop-color="#f8f8fe"/></linearGradient></defs>
<rect x="46" y="94" width="692" height="25" fill="url(#gTabRow)"/>
<path d="M52,118.5 L62,101 Q63,99.5 65,99.5 H130 Q132,99.5 133,101 L144,118.5 Z" fill="url(#gTab)"/>
<path d="M138,106 L143,100.5 Q144,99.5 146,99.5 H264 Q266,99.5 267,101 L278.5,118.5 H144 Z" fill="#eeeef8"/>
<path d="M52,118.5 L62,101 Q63,99.5 65,99.5 H130 Q132,99.5 133,101 L144,118.5 Z" fill="url(#gTab)"/>
<path d="M46.5,118.5 H52 L62,101 Q63,99.5 65,99.5 H130 Q132,99.5 133,101 L144,118.5" fill="none" stroke="#c7cfcc" stroke-width="1"/>
<path d="M138.5,105.5 L143,100.5 Q144,99.5 146,99.5 H264 Q266,99.5 267,101 L278.5,118.5 H738" fill="none" stroke="#c7cfcc" stroke-width="1"/>
<g transform="translate(62,101)">
<path d="M0.5,0.5 H10.5 L15.5,5.5 V15.5 H0.5 Z" fill="#fff" stroke="#a3a3a3"/>
<path d="M10.5,0.5 V5.5 H15.5" fill="#f4f4f4" stroke="#b8b8b8"/>
<path d="M6.8,3.6 L5.2,7.2" stroke="#5cb028" stroke-width="2.2" stroke-linecap="round"/>
<circle cx="7.3" cy="2.7" r="2.1" fill="#86d43c"/>
<ellipse cx="4.6" cy="8.4" rx="2.6" ry="1.5" fill="#52ac22"/>
<path d="M7.7,8 L9.5,6 L11.2,9.3 L13.9,6.2" stroke="#3a8ae0" stroke-width="1.3" fill="none"/>
<rect x="1" y="10" width="14" height="5" fill="#1a66b8"/>
<g fill="#fff" shape-rendering="crispEdges"><rect x="2" y="11" width="1" height="4"/><rect x="3" y="11" width="1" height="1"/><rect x="4" y="12" width="1" height="2"/><rect x="3" y="14" width="1" height="1"/><rect x="5" y="11" width="1" height="3"/><rect x="7" y="11" width="1" height="3"/><rect x="9" y="11" width="1" height="3"/><rect x="6" y="14" width="1" height="1"/><rect x="8" y="14" width="1" height="1"/><rect x="5" y="14" width="1" height="0.01"/><rect x="12" y="11" width="3" height="1"/><rect x="12" y="12" width="1" height="2"/><rect x="12" y="14" width="3" height="1"/><rect x="14" y="13" width="1" height="1"/></g>
</g>
<text x="81.5" y="112.6" font-family="Liberation Sans" font-weight="bold" font-size="11.2" fill="#000" textLength="52" lengthAdjust="spacingAndGlyphs" >Drawing1</text>
<g transform="translate(143,101)">
<path d="M0.5,0.5 H10.5 L15.5,5.5 V15.5 H0.5 Z" fill="#fff" stroke="#a3a3a3"/>
<path d="M10.5,0.5 V5.5 H15.5" fill="#f4f4f4" stroke="#b8b8b8"/>
<path d="M6.8,3.6 L5.2,7.2" stroke="#5cb028" stroke-width="2.2" stroke-linecap="round"/>
<circle cx="7.3" cy="2.7" r="2.1" fill="#86d43c"/>
<ellipse cx="4.6" cy="8.4" rx="2.6" ry="1.5" fill="#52ac22"/>
<path d="M7.7,8 L9.5,6 L11.2,9.3 L13.9,6.2" stroke="#3a8ae0" stroke-width="1.3" fill="none"/>
<rect x="1" y="10" width="14" height="5" fill="#1a66b8"/>
<g fill="#fff" shape-rendering="crispEdges"><rect x="2" y="11" width="1" height="4"/><rect x="3" y="11" width="1" height="1"/><rect x="4" y="12" width="1" height="2"/><rect x="3" y="14" width="1" height="1"/><rect x="5" y="11" width="1" height="3"/><rect x="7" y="11" width="1" height="3"/><rect x="9" y="11" width="1" height="3"/><rect x="6" y="14" width="1" height="1"/><rect x="8" y="14" width="1" height="1"/><rect x="5" y="14" width="1" height="0.01"/><rect x="12" y="11" width="3" height="1"/><rect x="12" y="12" width="1" height="2"/><rect x="12" y="14" width="3" height="1"/><rect x="14" y="13" width="1" height="1"/></g>
</g>
<text x="161.5" y="112.7" font-family="Liberation Sans" font-weight="normal" font-size="11.2" fill="#000" textLength="106.5" lengthAdjust="spacingAndGlyphs" >C:\...\CLINIC-3D.dwg</text>
<rect x="0" y="97" width="23" height="452" fill="url(#gLeft)"/>
<rect x="3" y="102" width="2" height="2" fill="#b8bcc0"/><rect x="7" y="102" width="2" height="2" fill="#b8bcc0"/><rect x="11" y="102" width="2" height="2" fill="#b8bcc0"/><rect x="15" y="102" width="2" height="2" fill="#b8bcc0"/>
<rect x="24.5" y="98.5" width="19" height="60" fill="url(#gDC)" stroke="#d3d8da" stroke-width="1"/>
<path transform="translate(23,103)" d="M11,2h1v1h-1zM11,3h1v1h-1zM15,3h1v1h-1zM6,4h6v1h-6zM14,4h1v1h-1zM5,5h1v1h-1zM7,5h1v1h-1zM5,6h1v1h-1zM10,6h1v1h-1zM12,6h1v1h-1zM5,7h1v1h-1zM9,7h2v1h-2zM13,7h3v1h-3zM6,8h1v1h-1zM8,8h1v1h-1zM10,8h1v1h-1zM15,8h1v1h-1zM7,9h1v1h-1zM10,9h1v1h-1zM15,9h1v1h-1zM6,10h1v1h-1zM8,10h1v1h-1zM10,10h1v1h-1zM12,10h4v1h-4zM5,11h1v1h-1zM9,11h2v1h-2zM12,11h1v1h-1zM5,12h1v1h-1zM12,12h1v1h-1zM11,14h1v1h-1zM11,15h1v1h-1zM15,15h1v1h-1zM6,16h6v1h-6zM14,16h1v1h-1zM7,17h1v1h-1zM8,18h1v1h-1zM12,18h1v1h-1zM12,19h1v1h-1zM12,20h1v1h-1zM5,21h11v1h-11zM12,22h1v1h-1zM12,23h1v1h-1zM12,24h1v1h-1zM8,27h6v1h-6zM9,28h1v1h-1zM13,28h1v1h-1zM9,29h1v1h-1zM13,29h1v1h-1zM9,30h1v1h-1zM13,30h1v1h-1zM5,31h11v1h-11zM9,32h1v1h-1zM13,32h1v1h-1zM9,33h1v1h-1zM13,33h1v1h-1zM9,34h1v1h-1zM13,34h1v1h-1zM8,35h6v1h-6zM7,38h1v1h-1zM8,39h3v1h-3zM6,41h8v1h-8zM5,42h1v1h-1zM5,43h1v1h-1zM15,43h1v1h-1zM5,44h1v1h-1zM12,44h3v1h-3zM5,45h1v1h-1zM5,46h4v1h-4zM11,47h1v1h-1zM8,48h3v1h-3z" fill="#000" shape-rendering="crispEdges"/>
<rect x="46" y="119" width="1" height="726" fill="#c7cfcc"/>
<rect x="47" y="119" width="691" height="726" fill="#ffffff"/>
<rect x="48" y="120" width="690" height="725" fill="#000"/>
<g shape-rendering="crispEdges" stroke="#ff0000" stroke-width="1" fill="none">
<polygon points="474.5,407.5 718.5,573 469.5,739.5 240.5,553.5"/>
<line x1="474.5" y1="406" x2="469.5" y2="740.5"/>
<rect x="337.5" y="467.5" width="275" height="219"/>
<rect x="378.5" y="525.5" width="196" height="118" stroke-dasharray="3,3"/>
</g>
<rect x="373" y="519" width="11" height="11" fill="#808080" shape-rendering="crispEdges"/>
<rect x="374" y="520" width="9" height="9" fill="#0041ff" shape-rendering="crispEdges"/>
<rect x="569" y="519" width="11" height="11" fill="#808080" shape-rendering="crispEdges"/>
<rect x="570" y="520" width="9" height="9" fill="#0041ff" shape-rendering="crispEdges"/>
<rect x="373" y="638" width="11" height="11" fill="#808080" shape-rendering="crispEdges"/>
<rect x="374" y="639" width="9" height="9" fill="#0041ff" shape-rendering="crispEdges"/>
<rect x="569" y="638" width="11" height="11" fill="#808080" shape-rendering="crispEdges"/>
<rect x="570" y="639" width="9" height="9" fill="#0041ff" shape-rendering="crispEdges"/>
<g fill="#fff">
<path fill-rule="evenodd" d="M510.2,546.3 L516.3,543.9 522.4,541.2 525,540 529.5,541.9 529.8,553.7 531.2,555 535.2,555.7 535.9,560.5 533.9,562.9 527.1,562.9 524.4,560.1 519.6,561.5 518.3,562.9 510.2,562.9 508.1,559.8 508.1,551.7 Z M517,553 L519,552 520,552.5 518,553.8 Z"/>
<path fill-rule="evenodd" d="M625.6,548.2 L631,548.2 632,549.6 632,558.7 634.4,557 640.8,555 645.2,556.3 649,561.1 649,575.6 643.9,581.1 634.4,581.1 629.6,576 627.6,576.7 622.9,576.7 621.2,572.9 622.2,566.8 623.2,562.1 624.2,550.9 Z M635,567.5 L637.1,565.1 640.8,564.8 640.8,571.9 638.1,573 Z"/>
<polygon points="671.9,498.1 678.7,498.1 682.8,500.2 682.8,505.2 681.8,505.9 675,505.9 675,518.5 685.8,519.1 689.9,521.2 689.9,525.6 688.5,526.9 672.3,526.9 668.9,524.6 667.2,520.8 667.2,504.2 668.6,500.2"/>
</g>
<g stroke="#f0f0f0" stroke-width="1" fill="none" shape-rendering="crispEdges">
<line x1="163.5" y1="681" x2="163.5" y2="815"/>
<polyline points="154,705 163.5,681 172,705"/>
<rect x="152.5" y="794.5" width="21" height="20"/>
<line x1="152" y1="804.5" x2="288" y2="804.5"/>
<polyline points="263,795 288,804.5 263,813"/>
<line x1="309.5" y1="792" x2="327" y2="816"/>
<line x1="327" y1="792" x2="309.5" y2="816"/>
<polyline points="154,637 163.5,649.5 172,637"/>
<line x1="163.5" y1="649.5" x2="163.5" y2="660"/>
</g>
<line x1="5" y1="112.5" x2="17" y2="123.5" stroke="#2a2a2a" stroke-width="1"/><rect x="4" y="111.5" width="2.2" height="2.2" fill="#2f6fc0"/><rect x="16" y="122.5" width="2.2" height="2.2" fill="#2f6fc0"/>
<line x1="5" y1="134" x2="17.5" y2="146" stroke="#2a2a2a" stroke-width="1" stroke-dasharray="2,1.5"/><rect x="4" y="133" width="2.2" height="2.2" fill="#2f6fc0"/><rect x="10" y="139" width="2.2" height="2.2" fill="#2f6fc0"/><rect x="16.5" y="145" width="2.2" height="2.2" fill="#2f6fc0"/>
<path d="M9,156.6 Q4.3,157.3 4,162 Q4.3,166.8 9,167.4 M13,167.5 H15.5" fill="none" stroke="#2a2a2a" stroke-width="1.1"/>
<g fill="#2f6fc0" shape-rendering="crispEdges"><rect x="10" y="156" width="2" height="2"/><rect x="3" y="161" width="2" height="2"/><rect x="10" y="166" width="2" height="2"/><rect x="17" y="166" width="2" height="2"/></g>
<path d="M10.9,177.6 L17.8,182.6 L15.2,190.4 H6.6 L4,182.6 Z" fill="none" stroke="#2a2a2a" stroke-width="1"/>
<rect x="5.3" y="201.3" width="11.5" height="10" fill="none" stroke="#2a2a2a" stroke-width="1"/><rect x="4" y="200" width="2.2" height="2.2" fill="#2f6fc0"/><rect x="16" y="210.5" width="2.2" height="2.2" fill="#2f6fc0"/>
<path d="M4,234 Q4.5,223 17,221" fill="none" stroke="#2a2a2a" stroke-width="1"/><rect x="3" y="232.5" width="2.2" height="2.2" fill="#2f6fc0"/><rect x="6.3" y="224" width="2.2" height="2.2" fill="#2f6fc0"/><rect x="16" y="220" width="2.2" height="2.2" fill="#2f6fc0"/>
<circle cx="11" cy="250" r="6.5" fill="none" stroke="#2a2a2a" stroke-width="1"/><line x1="11" y1="250" x2="17" y2="250" stroke="#2a2a2a" stroke-width="1" stroke-dasharray="1.5,1"/><rect x="10" y="249" width="2.2" height="2.2" fill="#2f6fc0"/><rect x="16.5" y="249" width="2.2" height="2.2" fill="#2f6fc0"/>
<path d="M5,275 Q2.5,272 4.5,270 Q5,267 8.5,267.5 Q11,265 13.5,267.5 Q17,267 17.3,270 Q19.5,272.5 17,275 Q16.5,278 13,277.5 Q11,279.5 8.5,277.5 Q5.5,278 5,275 Z" fill="none" stroke="#2a2a2a" stroke-width="1.4"/>
<path d="M3.8,296 Q4,291 8,291.5 Q10,292 11,294 Q13,297.5 16,296 Q18,294.5 18,291.5" fill="none" stroke="#2a2a2a" stroke-width="1"/><rect x="3" y="295.5" width="2.2" height="2.2" fill="#2f6fc0"/><rect x="10" y="293.5" width="2.2" height="2.2" fill="#2f6fc0"/><rect x="17" y="289.5" width="2.2" height="2.2" fill="#2f6fc0"/>
<ellipse cx="11" cy="315.5" rx="7" ry="5.8" fill="none" stroke="#2a2a2a" stroke-width="1"/><rect x="10" y="308.5" width="2.2" height="2.2" fill="#2f6fc0"/><rect x="3" y="315" width="2.2" height="2.2" fill="#2f6fc0"/><rect x="17" y="315" width="2.2" height="2.2" fill="#2f6fc0"/>
<path d="M9,332.5 Q3.5,334 3.8,338.5 Q4.5,343.5 11,343.5 Q15,343.5 17,340" fill="none" stroke="#2a2a2a" stroke-width="1"/><rect x="9" y="331" width="2.2" height="2.2" fill="#2f6fc0"/><rect x="16.5" y="338.5" width="2.2" height="2.2" fill="#2f6fc0"/>
<path d="M6.4,355.5 V352.4 H18.4 V363.4 H15.4 M7.8,357.2 H3.5 V364.6 H5" fill="none" stroke="#2a2a2a" stroke-width="1.1"/>
<circle cx="10" cy="364" r="3.6" fill="#fff" stroke="#2a2a2a" stroke-width="1.1"/>
<path d="M9,356.7 H12.6 V354.8 L16.2,357.8 L12.6,360.8 V358.9 H9 Z" fill="#4a9a78"/>
<path d="M20.8,366 V370 H16.8 Z" fill="#000"/>
<path d="M4.5,377.8 V384.4 H6.5 M7.4,375.7 H13.5 V377.8" fill="none" stroke="#2a2a2a" stroke-width="1.1"/><rect x="4" y="375" width="2" height="2" fill="#2f6fc0"/>
<circle cx="13.3" cy="384.4" r="5" fill="#fff" stroke="#2a2a2a" stroke-width="1.1"/>
<rect x="10" y="398.5" width="2.2" height="2.2" fill="#2f6fc0"/><rect x="5" y="407" width="2.2" height="2.2" fill="#2f6fc0"/><rect x="15" y="407" width="2.2" height="2.2" fill="#2f6fc0"/>
<rect x="4.6" y="419.6" width="13" height="13" rx="1.2" fill="#3a78c8" stroke="#2a2a2a" stroke-width="1.2"/>
<defs><pattern id="pH" width="2" height="2" patternUnits="userSpaceOnUse"><rect width="1" height="1" fill="#c8dcf4"/><rect x="1" y="1" width="1" height="1" fill="#c8dcf4"/></pattern></defs>
<rect x="6" y="421" width="10.2" height="10.2" fill="url(#pH)"/>
<defs><linearGradient id="gGr" x1="0" y1="0" x2="0" y2="1"><stop offset="0" stop-color="#d8e8fa"/><stop offset="1" stop-color="#3a78c8"/></linearGradient></defs>
<rect x="4.6" y="441.6" width="13" height="13" rx="1.2" fill="url(#gGr)" stroke="#2a2a2a" stroke-width="1.2"/>
<rect x="5.6" y="465.6" width="11" height="9.5" fill="none" stroke="#2a2a2a" stroke-width="1.2"/><circle cx="11" cy="470.3" r="2.4" fill="none" stroke="#2a2a2a" stroke-width="1"/>
<path d="M11,484.5 L15.5,489.5 V494 H6.5 V489.5 Z M6.5,489.5 H15.5 M6.5,494 L4.5,498.5 H18 L15.5,494" fill="none" stroke="#2a2a2a" stroke-width="1.2"/>
<g shape-rendering="crispEdges"><rect x="3" y="507" width="16" height="15" fill="#4275b1"/><rect x="4" y="511" width="14" height="10" fill="#fff"/><rect x="7" y="511" width="1" height="10" fill="#9d8e9c"/><rect x="11" y="511" width="1" height="10" fill="#9d8e9c"/><rect x="15" y="511" width="1" height="10" fill="#9d8e9c"/><rect x="4" y="514" width="14" height="1" fill="#9d8e9c"/><rect x="4" y="518" width="14" height="1" fill="#9d8e9c"/></g>
<rect x="4.6" y="529.6" width="13.5" height="13" fill="#fff" stroke="#2a2a2a" stroke-width="1.3"/>
<path d="M6.5,536.5 L8.5,531.5 L10.5,536.5 M7.2,535 H9.8" fill="none" stroke="#2f6fc0" stroke-width="1"/>
<path d="M12,536.5 H16.5 M6,538.5 H16.5 M6,540.5 H16.5" stroke="#2a2a2a" stroke-width="0.9"/>
</svg>
</body></html>
